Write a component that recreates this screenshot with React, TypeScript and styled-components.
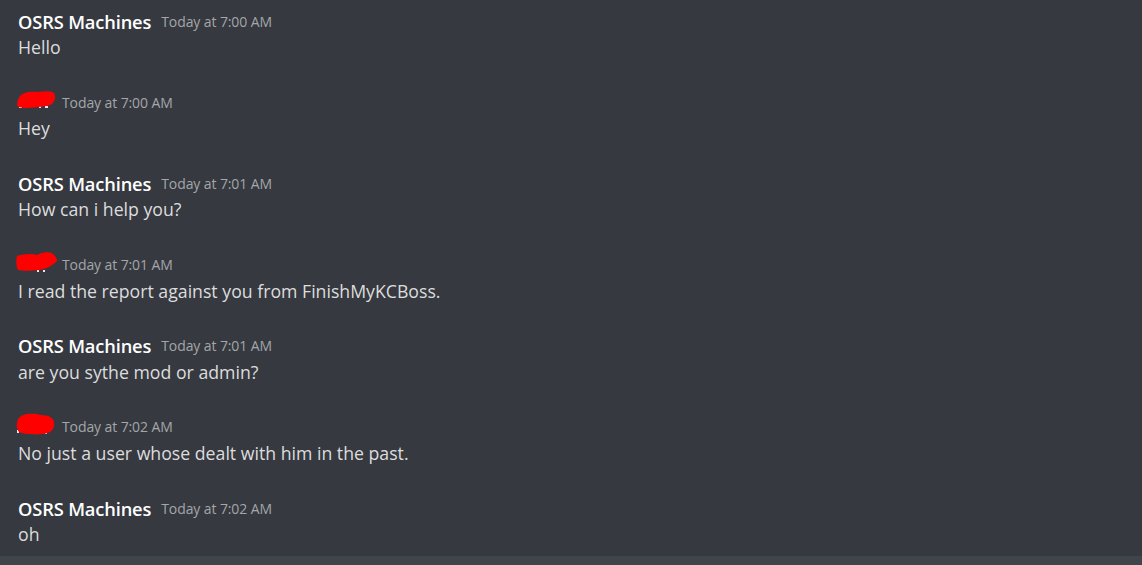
import React from "react";
import styled, { createGlobalStyle } from "styled-components";

const GlobalStyle = createGlobalStyle`
  html, body {
    margin: 0;
    padding: 0;
    background: #36393f;
  }
  body {
    font-family: "Open Sans", "Noto Sans", sans-serif;
    -webkit-font-smoothing: antialiased;
  }
`;

const Page = styled.div`
  width: 1142px;
  height: 565px;
  display: flex;
  flex-direction: column;
  background: #36393f;
  overflow: hidden;
`;

const Chat = styled.main`
  height: 556px;
  display: flex;
  flex-direction: column;
  gap: 33.2px;
  padding: 10px 18px 0;
  box-sizing: border-box;
  overflow: hidden;
`;

const Footer = styled.div`
  height: 9px;
  background: #40444b;
`;

const Group = styled.article`
  display: flex;
  flex-direction: column;
`;

const Header = styled.div`
  display: flex;
  align-items: center;
  gap: 10px;
  height: 22px;
`;

const Name = styled.span`
  color: #ffffff;
  font-size: 18.3px;
  font-weight: 600;
  letter-spacing: -0.15px;
`;

const Hidden = styled.span`
  display: inline-block;
  width: 38px;
  height: 22px;
  margin-left: -1px;
  margin-right: -3px;

  svg {
    display: block;
    overflow: visible;
  }
`;

const Time = styled.span`
  color: #a3a6aa;
  font-size: 14px;
  letter-spacing: -0.1px;
`;

const Content = styled.div`
  color: #dcddde;
  font-size: 17.7px;
  line-height: 22px;
  height: 22px;
  margin-top: 4px;
`;

type Msg = { author?: string; blob?: number; time: string; text: string };

const messages: Msg[] = [
  { author: "OSRS Machines", time: "Today at 7:00 AM", text: "Hello" },
  { blob: 0, time: "Today at 7:00 AM", text: "Hey" },
  { author: "OSRS Machines", time: "Today at 7:01 AM", text: "How can i help you?" },
  { blob: 1, time: "Today at 7:01 AM", text: "I read the report against you from FinishMyKCBoss." },
  { author: "OSRS Machines", time: "Today at 7:01 AM", text: "are you sythe mod or admin?" },
  { blob: 2, time: "Today at 7:02 AM", text: "No just a user whose dealt with him in the past." },
  { author: "OSRS Machines", time: "Today at 7:02 AM", text: "oh" },
];

// hand-drawn red scribbles that hide the other user's name
const blobs = [
  "M3 5 C 6 1, 14 0, 22 1 C 28 0, 34 0, 37 2 C 39 6, 38 10, 35 13 C 30 16, 20 16, 10 17 C 4 17, 0 16, 0 14 C 0 11, 1 8, 3 5 Z",
  "M0 2 C 6 0, 14 -1, 20 1 C 26 -2, 34 -3, 37 1 C 39 3, 40 5, 40 7 C 36 11, 30 15, 22 16 C 14 17, 6 17, 1 16 C -1 12, -1 6, 0 2 Z",
  "M2 2 C 6 -3, 16 -3, 24 -1 C 32 -1, 37 2, 37 7 C 38 13, 34 17, 26 18 C 18 19, 6 18, 2 16 C -1 12, -1 6, 2 2 Z",
];

const peeks = [
  [[2, 15, 3, 2], [22, 15, 2, 2], [28, 15, 3, 2]],
  [[20, 16, 2, 2], [26, 16, 2, 2]],
  [[0, 14, 2, 3], [28, 16, 2, 2]],
];

function Redacted({ variant }: { variant: number }) {
  return (
    <Hidden>
      <svg width="38" height="22" viewBox="0 0 38 22">
        {peeks[variant].map(([x, y, w, h], i) => (
          <rect key={i} x={x} y={y} width={w} height={h} fill="#e8e8ea" />
        ))}
        <path d={blobs[variant]} fill="#ff0000" />
      </svg>
    </Hidden>
  );
}

export default function App() {
  return (
    <Page>
      <GlobalStyle />
      <Chat>
        {messages.map((m, i) => (
          <Group key={i}>
            <Header>
              {m.author ? <Name>{m.author}</Name> : <Redacted variant={m.blob ?? 0} />}
              <Time>{m.time}</Time>
            </Header>
            <Content>{m.text}</Content>
          </Group>
        ))}
      </Chat>
      <Footer />
    </Page>
  );
}
